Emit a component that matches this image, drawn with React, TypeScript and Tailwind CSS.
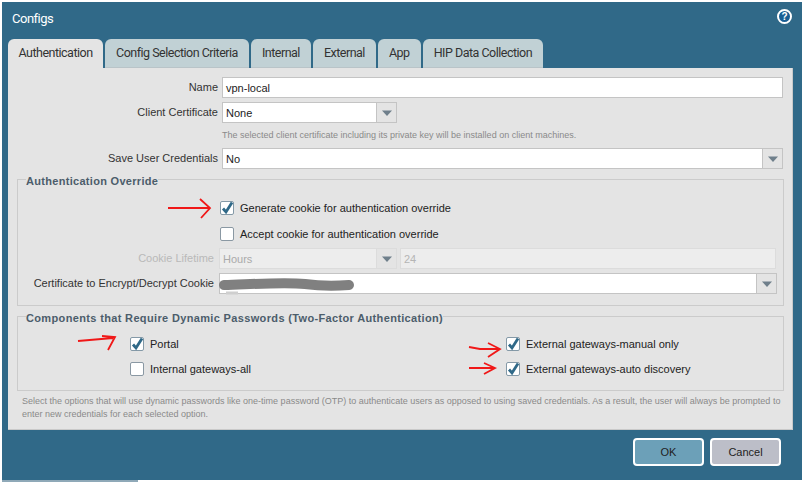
const tabs = ["Config Selection Criteria", "Internal", "External", "App", "HIP Data Collection"];

function Arrow() {
  return (
    <svg width="12" height="8" viewBox="0 0 12 8">
      <path d="M1 1.5h10L6 7z" fill="#6f7f8b" />
    </svg>
  );
}

function Combo({ value, className, arrowClass = "" }: { value?: string; className: string; arrowClass?: string }) {
  return (
    <div className={`flex h-[21px] border border-[#c4c4c4] bg-white ${className}`}>
      <div className="flex-1 truncate pl-[3px] text-[11px] leading-[21px] text-[#222]">{value}</div>
      <div className={`flex w-[20px] items-center justify-center border-l border-[#c4c4c4] bg-[#e4e4e4] ${arrowClass}`}>
        <Arrow />
      </div>
    </div>
  );
}

function Check({ checked, label }: { checked?: boolean; label: string }) {
  return (
    <div className="flex h-[14px] items-center gap-[6px]">
      <div className={`flex h-[14px] w-[14px] items-center justify-center rounded-[2px] border-[1.5px] bg-white ${checked ? "border-[#8499a7]" : "border-[#8a98a3]"}`}>
        {checked && (
          <svg className="overflow-visible" width="11" height="11" viewBox="0 0 11 11">
            <path d="M1 5.5l3 3.5L10 -0.5" fill="none" stroke="#306988" strokeWidth="2.8" />
          </svg>
        )}
      </div>
      <span className="text-[11px] whitespace-nowrap text-[#222]">{label}</span>
    </div>
  );
}

function Label({ children, className = "text-[#333]" }: { children: string; className?: string }) {
  return <div className={`text-right text-[11px] whitespace-nowrap ${className}`}>{children}</div>;
}

export default function App() {
  return (
    <div className="relative h-[482px] w-[804px] overflow-hidden bg-white p-[2px] font-['Liberation_Sans',sans-serif]">
      <div className="flex h-[478px] w-[800px] flex-col bg-[#306988]">
        <div className="flex h-[37px] items-start justify-between pl-[10px] pr-[10px] pt-[8px]">
          <span className="font-['Roboto',sans-serif] text-[13px] leading-[18px] tracking-[-0.5px] text-white">Configs</span>
          <div className="mt-[-1px] flex h-[15px] w-[15px] items-center justify-center rounded-full border-2 border-white bg-[#1a5f94] text-[10px] leading-none font-bold text-white">?</div>
        </div>

        <div className="ml-[6px] flex h-[29px] gap-[2px] font-['Roboto',sans-serif] text-[12.5px] tracking-[-0.5px]">
          <div className="flex w-[95px] items-center justify-center rounded-t-[6px] bg-[#e4e4e4] text-[#333]">Authentication</div>
          {tabs.map((t) => (
            <div key={t} className="flex items-center rounded-t-[6px] border-b border-[#b9c4c8] bg-[#c1d1d5] px-[11px] text-[#333]">{t}</div>
          ))}
        </div>

        <div className="ml-[6px] h-[362px] w-[785px] border-r border-b border-[#c9c9c9] bg-[#e4e4e4] pl-[9px] pt-[9px]">
          <div className="flex flex-col">
            <div className="flex items-center gap-[4px]">
              <div className="w-[201px]"><Label>Name</Label></div>
              <div className="h-[21px] w-[561px] border border-[#c4c4c4] bg-white pl-[3px] text-[11px] leading-[21px] text-[#222]">vpn-local</div>
            </div>
            <div className="mt-[4px] flex items-center gap-[4px]">
              <div className="w-[201px]"><Label>Client Certificate</Label></div>
              <Combo value="None" className="w-[175px]" />
            </div>
            <div className="mt-[5px] pl-[205px] text-[9px] leading-[14px] text-[#8a8a8a]">
              The selected client certificate including its private key will be installed on client machines.
            </div>
            <div className="mt-[6px] flex items-center gap-[4px]">
              <div className="w-[201px]"><Label>Save User Credentials</Label></div>
              <Combo value="No" className="w-[561px]" />
            </div>
          </div>

          <fieldset className="mt-0 h-[137px] w-[767px] border border-[#cbcbcb] pl-[8px]">
            <legend className="pt-[4px] text-[11px] leading-[16px] font-bold tracking-[0.3px] text-[#4c5d6b]">Authentication Override</legend>
            <div className="mt-[12px] pl-[194px]"><Check checked label="Generate cookie for authentication override" /></div>
            <div className="mt-[12px] pl-[194px]"><Check label="Accept cookie for authentication override" /></div>
            <div className="mt-[7px] flex items-center gap-[5px]">
              <div className="w-[188px]"><Label className="text-[#b9b9b9]">Cookie Lifetime</Label></div>
              <Combo value="Hours" className="w-[178px] border-[#dcdcdc] !bg-[#ededed] [&>div]:border-[#dcdcdc] [&>div]:text-[#aaa]" />
              <div className="-ml-[2px] h-[21px] w-[376px] border border-[#dcdcdc] bg-[#ededed] pl-[3px] text-[11px] leading-[21px] text-[#b5b5b5]">24</div>
            </div>
            <div className="mt-[4px] flex items-center gap-[5px]">
              <div className="w-[188px]"><Label>Certificate to Encrypt/Decrypt Cookie</Label></div>
              <Combo className="w-[558px]" />
            </div>
          </fieldset>

          <fieldset className="mt-0 h-[85px] w-[767px] border border-[#cbcbcb] pl-[8px]">
            <legend className="pt-[4px] text-[11px] leading-[16px] font-bold tracking-[0.35px] text-[#4c5d6b]">Components that Require Dynamic Passwords (Two-Factor Authentication)</legend>
            <div className="mt-[11px] grid grid-cols-[376px_1fr] gap-y-[11px] pl-[104px]">
              <Check checked label="Portal" />
              <Check checked label="External gateways-manual only" />
              <Check label="Internal gateways-all" />
              <Check checked label="External gateways-auto discovery" />
            </div>
          </fieldset>

          <div className="mt-[4px] w-[768px] pl-[5px] text-[9px] leading-[13px] text-[#8a8a8a]">
            Select the options that will use dynamic passwords like one-time password (OTP) to authenticate users as opposed to using saved credentials. As a result, the user will always be prompted to enter new credentials for each selected option.
          </div>
        </div>

        <div className="flex justify-end gap-[6px] pr-[21px] pt-[8px]">
          <button className="h-[28px] w-[71px] rounded-[4px] border-2 border-white bg-[#6ca0b8] text-[11px] text-[#222]">OK</button>
          <button className="h-[28px] w-[71px] rounded-[4px] border-2 border-white bg-[#bcbec8] text-[11px] text-[#222]">Cancel</button>
        </div>
      </div>
      <div className="absolute bottom-0 left-[2px] h-[2px] w-[136px] bg-[#8fa9b8]" />

      {/* hand-drawn annotations on top of the dialog */}
      <svg className="pointer-events-none absolute left-0 top-0" width="804" height="482">
        <path d="M226 293h12" stroke="#cfcfcf" strokeWidth="3" fill="none" />
        <path d="M224 285C255 284 285 282 305 284C320 286 335 286 349 285" stroke="#808080" strokeWidth="10" strokeLinecap="round" fill="none" />
        <g stroke="#f01818" strokeWidth="1.8" fill="none">
          <path d="M168 208H210M200 199L210 208L201 218" />
          <path d="M78 341L113 338M102 336L115 337L108 350" />
          <path d="M469 347L480 349H500M488 343L500 349L488 357" />
          <path d="M469 368H495M484 363L495 368L484 374" />
        </g>
      </svg>
    </div>
  );
}
